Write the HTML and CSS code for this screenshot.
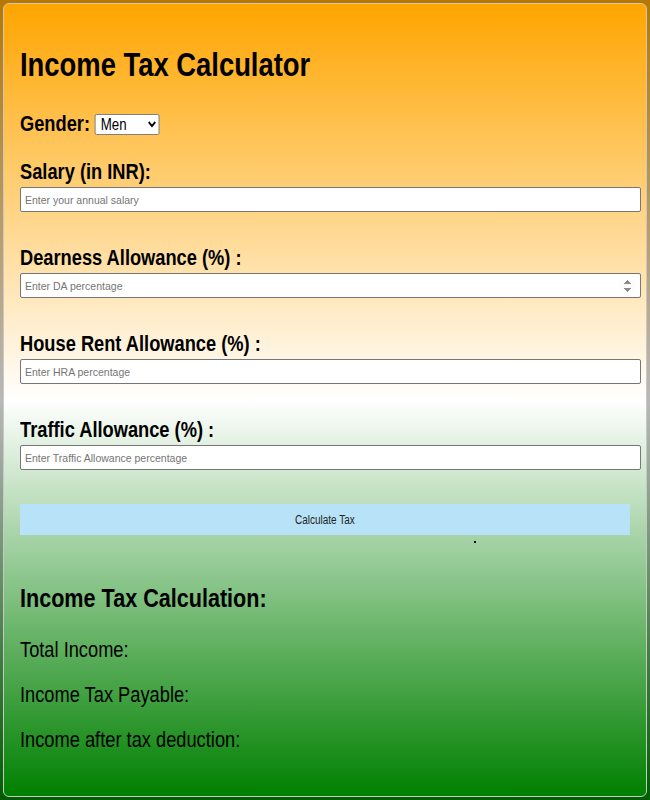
FILE: index.html
```html
<!DOCTYPE html>
<html lang="en">
<head>
<meta charset="utf-8">
<title>Income Tax Calculator</title>
<link rel="stylesheet" href="styles.css">
</head>
<body>
<div class="card">
  <h1 class="title narrow">Income Tax Calculator</h1>
  <div class="gender-row">
    <label class="label" for="gender">Gender:</label>
    <select id="gender" class="select">
      <option>Men</option>
      <option>Women</option>
    </select>
  </div>
  <div class="field first">
    <label class="label narrow" for="salary">Salary (in INR):</label>
    <input id="salary" class="input" type="number" placeholder="Enter your annual salary">
  </div>
  <div class="field">
    <label class="label narrow" for="da">Dearness Allowance (%) :</label>
    <input id="da" class="input hovered" type="number" placeholder="Enter DA percentage">
  </div>
  <div class="field">
    <label class="label narrow" for="hra">House Rent Allowance (%) :</label>
    <input id="hra" class="input" type="number" placeholder="Enter HRA percentage">
  </div>
  <div class="field">
    <label class="label narrow" for="ta">Traffic Allowance (%) :</label>
    <input id="ta" class="input" type="number" placeholder="Enter Traffic Allowance percentage">
  </div>
  <button class="calc-btn" type="button"><span class="btn-text">Calculate Tax</span></button>
  <span class="dot"></span>
  <h2 class="result-title narrow">Income Tax Calculation:</h2>
  <p class="result narrow first-result">Total Income:</p>
  <p class="result narrow">Income Tax Payable:</p>
  <p class="result narrow">Income after tax deduction:</p>
</div>
</body>
</html>
```

FILE: styles.css
```css
html, body {
  margin: 0;
  padding: 0;
  height: 100%;
}

body {
  padding: 3px;
  box-sizing: border-box;
  background:
    linear-gradient(rgba(0, 0, 0, 0.28), rgba(0, 0, 0, 0.28)),
    linear-gradient(#ffa500, #ffffff, #008000);
  font-family: "Liberation Sans", Arial, sans-serif;
  color: #000;
}

.card {
  position: relative;
  box-sizing: border-box;
  height: 100%;
  padding: 20px 16px 0;
  border: 1px solid #c8c8c8;
  border-radius: 6px;
  background: linear-gradient(#ffa500, #ffffff, #008000);
}

/* the reference renders Arial horizontally condensed */
.narrow {
  transform: scaleX(0.83);
  transform-origin: left center;
}

.title {
  margin: 22px 0 0;
  font-size: 33px;
  line-height: 38px;
  font-weight: bold;
}

.gender-row {
  display: flex;
  align-items: center;
  gap: 6px;
  margin-top: 27px;
  height: 25px;
  transform: scaleX(0.83);
  transform-origin: left center;
}

.label {
  display: block;
  font-size: 22px;
  line-height: 25px;
  font-weight: bold;
}

.select {
  width: 78px;
  height: 21px;
  margin-top: 2px;
  padding: 0 0 0 2px;
  font-family: "Liberation Sans", Arial, sans-serif;
  font-size: 16px;
  color: #000;
  background: #fff;
  border: 1px solid #767676;
  border-radius: 2px;
}

.field {
  margin-top: 33px;
}

.field.first {
  margin-top: 23px;
}

.input {
  display: block;
  box-sizing: border-box;
  width: calc(100% + 11px);
  height: 25px;
  margin-top: 3px;
  padding: 0 5px 0 4px;
  border: 1px solid #767676;
  border-radius: 2px;
  background: #fff;
  font-family: "Liberation Sans", Arial, sans-serif;
  font-size: 10.5px;
  color: #000;
}

.input::placeholder {
  color: #757575;
}

.input::-webkit-inner-spin-button,
.input::-webkit-outer-spin-button {
  opacity: 0;
}

.input.hovered::-webkit-inner-spin-button {
  opacity: 1;
}

.calc-btn {
  display: block;
  width: 100%;
  height: 31px;
  margin-top: 34px;
  padding: 0;
  border: none;
  background: #b8e2f8;
  color: #222;
  font-family: "Liberation Sans", Arial, sans-serif;
  font-size: 12px;
}

.btn-text {
  display: inline-block;
  transform: scaleX(0.83);
}

.dot {
  position: absolute;
  left: 470px;
  top: 537px;
  width: 2px;
  height: 2px;
  background: #000;
}

.result-title {
  margin: 48px 0 0;
  font-size: 26px;
  line-height: 30px;
  font-weight: bold;
}

.result {
  margin: 20px 0 0;
  font-size: 22px;
  line-height: 25px;
}

.result.first-result {
  margin-top: 24px;
}
```
